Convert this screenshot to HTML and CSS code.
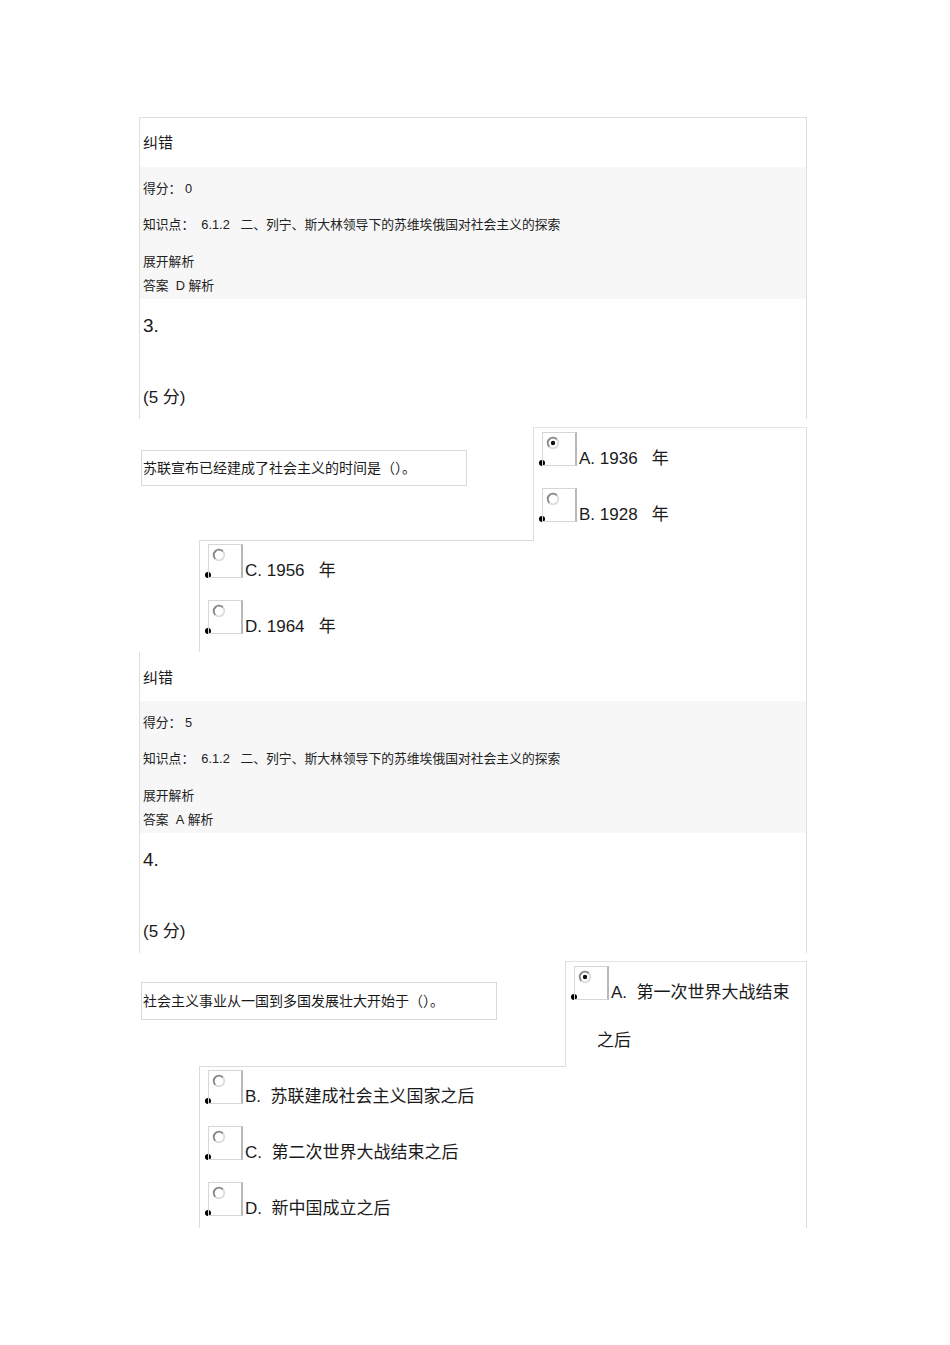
FILE: index.html
```html
<!DOCTYPE html>
<html lang="zh-CN">
<head>
    <meta charset="UTF-8">
    <title>作业详情</title>
    <link rel="stylesheet" href="styles.css">
</head>
<body>

    <div class="paper">

        <!-- 第2题 结果 + 第3题 -->
        <div class="question-block">
            <div class="fix-row">纠错</div>
            <div class="info-band">
                <div class="score">得分：&nbsp;0</div>
                <div class="point">知识点：&nbsp;&nbsp;6.1.2&nbsp;&nbsp;&nbsp;二、列宁、斯大林领导下的苏维埃俄国对社会主义的探索</div>
                <div class="expand">展开解析</div>
                <div class="answer">答案&nbsp;&nbsp;D&nbsp;解析</div>
            </div>
            <div class="q-num">3.</div>
            <div class="q-score">(5 分)</div>
        </div>

        <div class="answer-row">
            <div class="stem-col">
                <div class="stem">苏联宣布已经建成了社会主义的时间是（）。</div>
                <div class="stem-edge"></div>
            </div>
            <ul class="options-panel">
                <li><span class="dot"></span><span class="radio-box checked"><svg width="14" height="14" viewBox="0 0 14 14"><circle cx="7" cy="7" r="5.3" fill="#fff" stroke="#dcdcdc" stroke-width="1.8"/><path d="M3.25 10.75A5.3 5.3 0 0 1 10.75 3.25" fill="none" stroke="#8a8a8a" stroke-width="1.8"/><circle cx="7" cy="7" r="2.2" fill="#111"/></svg></span><span class="label">A. 1936&nbsp;&nbsp;&nbsp;年</span></li>
                <li><span class="dot"></span><span class="radio-box"><svg width="14" height="14" viewBox="0 0 14 14"><circle cx="7" cy="7" r="5.3" fill="#fff" stroke="#dcdcdc" stroke-width="1.8"/><path d="M3.25 10.75A5.3 5.3 0 0 1 10.75 3.25" fill="none" stroke="#8a8a8a" stroke-width="1.8"/></svg></span><span class="label">B. 1928&nbsp;&nbsp;&nbsp;年</span></li>
            </ul>
        </div>
        <ul class="options-lower">
            <li><span class="dot"></span><span class="radio-box"><svg width="14" height="14" viewBox="0 0 14 14"><circle cx="7" cy="7" r="5.3" fill="#fff" stroke="#dcdcdc" stroke-width="1.8"/><path d="M3.25 10.75A5.3 5.3 0 0 1 10.75 3.25" fill="none" stroke="#8a8a8a" stroke-width="1.8"/></svg></span><span class="label">C. 1956&nbsp;&nbsp;&nbsp;年</span></li>
            <li><span class="dot"></span><span class="radio-box"><svg width="14" height="14" viewBox="0 0 14 14"><circle cx="7" cy="7" r="5.3" fill="#fff" stroke="#dcdcdc" stroke-width="1.8"/><path d="M3.25 10.75A5.3 5.3 0 0 1 10.75 3.25" fill="none" stroke="#8a8a8a" stroke-width="1.8"/></svg></span><span class="label">D. 1964&nbsp;&nbsp;&nbsp;年</span></li>
        </ul>

        <!-- 第3题 结果 + 第4题 -->
        <div class="question-block no-top">
            <div class="fix-row">纠错</div>
            <div class="info-band">
                <div class="score">得分：&nbsp;5</div>
                <div class="point">知识点：&nbsp;&nbsp;6.1.2&nbsp;&nbsp;&nbsp;二、列宁、斯大林领导下的苏维埃俄国对社会主义的探索</div>
                <div class="expand">展开解析</div>
                <div class="answer">答案&nbsp;&nbsp;A&nbsp;解析</div>
            </div>
            <div class="q-num">4.</div>
            <div class="q-score">(5 分)</div>
        </div>

        <div class="answer-row">
            <div class="stem-col wide">
                <div class="stem">社会主义事业从一国到多国发展壮大开始于（）。</div>
                <div class="stem-edge"></div>
            </div>
            <ul class="options-panel">
                <li><span class="dot"></span><span class="radio-box checked"><svg width="14" height="14" viewBox="0 0 14 14"><circle cx="7" cy="7" r="5.3" fill="#fff" stroke="#dcdcdc" stroke-width="1.8"/><path d="M3.25 10.75A5.3 5.3 0 0 1 10.75 3.25" fill="none" stroke="#8a8a8a" stroke-width="1.8"/><circle cx="7" cy="7" r="2.2" fill="#111"/></svg></span><span class="label">A.&nbsp;&nbsp;第一次世界大战结束之后</span></li>
            </ul>
        </div>
        <ul class="options-lower">
            <li><span class="dot"></span><span class="radio-box"><svg width="14" height="14" viewBox="0 0 14 14"><circle cx="7" cy="7" r="5.3" fill="#fff" stroke="#dcdcdc" stroke-width="1.8"/><path d="M3.25 10.75A5.3 5.3 0 0 1 10.75 3.25" fill="none" stroke="#8a8a8a" stroke-width="1.8"/></svg></span><span class="label">B.&nbsp;&nbsp;苏联建成社会主义国家之后</span></li>
            <li><span class="dot"></span><span class="radio-box"><svg width="14" height="14" viewBox="0 0 14 14"><circle cx="7" cy="7" r="5.3" fill="#fff" stroke="#dcdcdc" stroke-width="1.8"/><path d="M3.25 10.75A5.3 5.3 0 0 1 10.75 3.25" fill="none" stroke="#8a8a8a" stroke-width="1.8"/></svg></span><span class="label">C.&nbsp;&nbsp;第二次世界大战结束之后</span></li>
            <li><span class="dot"></span><span class="radio-box"><svg width="14" height="14" viewBox="0 0 14 14"><circle cx="7" cy="7" r="5.3" fill="#fff" stroke="#dcdcdc" stroke-width="1.8"/><path d="M3.25 10.75A5.3 5.3 0 0 1 10.75 3.25" fill="none" stroke="#8a8a8a" stroke-width="1.8"/></svg></span><span class="label">D.&nbsp;&nbsp;新中国成立之后</span></li>
        </ul>

    </div>

</body>
</html>
```

FILE: styles.css
```css
/* General */
body {
    margin: 0;
    background-color: #fff;
    color: #1a1a1a;
    font-family: "Liberation Sans", "Noto Sans CJK SC", sans-serif;
}

.paper {
    width: 668px;
    margin-left: 139px;
    padding-top: 117px;
}

/* Result + question header */
.question-block {
    border: 1px solid #dedede;
    border-bottom: none;
    padding-bottom: 2px;
}

.question-block.no-top {
    border-top: none;
    margin-top: 6px;
}

.fix-row {
    height: 49px;
    line-height: 49px;
    padding-left: 3px;
    font-size: 15px;
}

.no-top .fix-row {
    line-height: 52px;
}

.info-band {
    background-color: #f7f7f7;
    padding: 4px 0 1px 3px;
    font-size: 12.8px;
    color: #222;
}

.score,
.point {
    line-height: 36px;
}

.expand {
    margin-top: 7px;
    line-height: 24px;
}

.answer {
    line-height: 24px;
}

.q-num {
    height: 54px;
    line-height: 54px;
    padding-left: 3px;
    font-size: 19px;
}

.q-score {
    padding-top: 26px;
    line-height: 38px;
    padding-left: 3px;
    font-size: 17px;
}

/* Question stem + options */
.answer-row {
    display: flex;
}

.stem-col {
    width: 394px;
    display: flex;
    flex-direction: column;
}

.stem-col.wide {
    width: 426px;
}

.stem {
    align-self: flex-start;
    margin: 31px 0 0 2px;
    height: 34px;
    line-height: 34px;
    padding: 0 50px 0 1px;
    border: 1px solid #d8d8d8;
    font-size: 14px;
}

.stem-col.wide .stem {
    margin-top: 29px;
    height: 36px;
    line-height: 36px;
    padding-right: 52px;
}

.stem-edge {
    margin-top: auto;
    margin-left: 60px;
    border-bottom: 1px solid #dcdcdc;
}

.options-panel,
.options-lower {
    list-style: none;
    margin: 0;
    padding: 4px 8px 0 0;
    border-left: 1px solid #dcdcdc;
    border-right: 1px solid #dcdcdc;
}

.options-panel {
    flex: 1;
    margin-top: 8px;
    border-top: 1px solid #e4e4e4;
    padding-bottom: 1px;
}

.options-lower {
    margin-left: 60px;
    padding-top: 3px;
}

.options-panel li,
.options-lower li {
    padding-left: 31px;
    text-indent: -26px;
    line-height: 46px;
    font-size: 17px;
    margin-bottom: 4px;
}

.options-panel li:last-child {
    margin-bottom: 0;
}

.options-lower li:last-child {
    margin-bottom: -6px;
}

.dot {
    display: inline-block;
    width: 6px;
    height: 6px;
    border-radius: 50%;
    background-color: #000;
    vertical-align: 0;
}

.radio-box {
    display: inline-block;
    width: 32px;
    height: 32px;
    margin-left: -3px;
    overflow: hidden;
    text-indent: 0;
    line-height: 0;
    border: 1px solid #d6d6d6;
    border-right: 2px solid #b8b8b8;
    box-sizing: content-box;
}

.radio-box svg {
    margin: 3px 0 0 3px;
}

.label {
    margin-left: 2px;
    vertical-align: 2px;
}
```
